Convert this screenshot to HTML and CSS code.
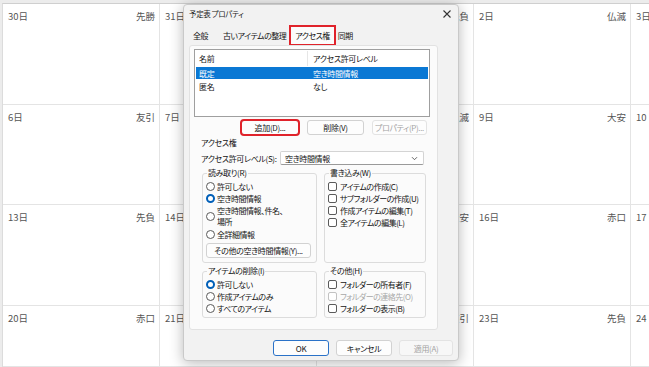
FILE: index.html
```html
<!DOCTYPE html>
<html lang="ja">
<head>
<meta charset="utf-8">
<title>予定表 プロパティ</title>
<link rel="stylesheet" href="styles.css">
</head>
<body>
<div class="cal">
  <div class="cell"><span>30日</span><span>先勝</span></div>
  <div class="cell"><span>31日</span><span>友引</span></div>
  <div class="cell"><span>1日</span><span>先負</span></div>
  <div class="cell"><span>2日</span><span>仏滅</span></div>
  <div class="cell"><span>3日</span></div>

  <div class="cell"><span>6日</span><span>友引</span></div>
  <div class="cell"><span>7日</span><span>先負</span></div>
  <div class="cell"><span>8日</span><span>仏滅</span></div>
  <div class="cell"><span>9日</span><span>大安</span></div>
  <div class="cell"><span>10</span></div>

  <div class="cell"><span>13日</span><span>先負</span></div>
  <div class="cell"><span>14日</span><span>仏滅</span></div>
  <div class="cell"><span>15日</span><span>大安</span></div>
  <div class="cell"><span>16日</span><span>赤口</span></div>
  <div class="cell"><span>17</span></div>

  <div class="cell"><span>20日</span><span>赤口</span></div>
  <div class="cell"><span>21日</span><span>先勝</span></div>
  <div class="cell"><span>22日</span><span>友引</span></div>
  <div class="cell"><span>23日</span><span>先負</span></div>
  <div class="cell"><span>24</span></div>
</div>

<div class="dialog">
  <div class="titlebar">
    <span class="title">予定表 プロパティ</span>
    <svg class="close" width="8" height="8" viewBox="0 0 8 8"><path d="M0.5 0.5 L7.5 7.5 M7.5 0.5 L0.5 7.5" stroke="#333" stroke-width="1.1" fill="none"/></svg>
  </div>
  <div class="tabs">
    <span class="tab t1">全般</span>
    <span class="tab t2">古いアイテムの整理</span>
    <span class="tab active">アクセス権</span>
    <span class="tab t4">同期</span>
  </div>
  <div class="panel">
    <div class="list">
      <div class="lrow head"><span class="c1">名前</span><span class="c2">アクセス許可レベル</span></div>
      <div class="lrow sel"><span class="c1">既定</span><span class="c2">空き時間情報</span></div>
      <div class="lrow"><span class="c1">匿名</span><span class="c2">なし</span></div>
    </div>
    <div class="btnrow">
      <span class="btn b-add">追加(D)...</span>
      <span class="btn b-del">削除(V)</span>
      <span class="btn b-prop disabled">プロパティ(P)...</span>
    </div>
    <div class="sect">アクセス権</div>
    <div class="level">
      <span class="lvl-label">アクセス許可レベル(S):</span>
      <span class="select"><span>空き時間情報</span>
        <svg width="7" height="5" viewBox="0 0 7 5"><path d="M1 1.2 L3.5 3.7 L6 1.2" stroke="#555" stroke-width="0.9" fill="none"/></svg>
      </span>
    </div>
    <div class="groups">
      <fieldset class="grp left up">
        <legend>読み取り(R)</legend>
        <div class="opt"><span class="radio"></span><span>許可しない</span></div>
        <div class="opt"><span class="radio on"></span><span>空き時間情報</span></div>
        <div class="opt two"><span class="radio"></span><span>空き時間情報、件名、<br>場所</span></div>
        <div class="opt"><span class="radio"></span><span>全詳細情報</span></div>
        <span class="btn b-more">その他の空き時間情報(Y)...</span>
      </fieldset>
      <fieldset class="grp right up">
        <legend>書き込み(W)</legend>
        <div class="opt"><span class="check"></span><span>アイテムの作成(C)</span></div>
        <div class="opt"><span class="check"></span><span>サブフォルダーの作成(U)</span></div>
        <div class="opt"><span class="check"></span><span>作成アイテムの編集(T)</span></div>
        <div class="opt"><span class="check"></span><span>全アイテムの編集(L)</span></div>
      </fieldset>
      <fieldset class="grp left low">
        <legend>アイテムの削除(I)</legend>
        <div class="opt"><span class="radio on"></span><span>許可しない</span></div>
        <div class="opt"><span class="radio"></span><span>作成アイテムのみ</span></div>
        <div class="opt"><span class="radio"></span><span>すべてのアイテム</span></div>
      </fieldset>
      <fieldset class="grp right low">
        <legend>その他(H)</legend>
        <div class="opt"><span class="check"></span><span>フォルダーの所有者(F)</span></div>
        <div class="opt dis"><span class="check"></span><span>フォルダーの連絡先(O)</span></div>
        <div class="opt"><span class="check"></span><span>フォルダーの表示(B)</span></div>
      </fieldset>
    </div>
  </div>
  <div class="footer">
    <span class="btn fbtn ok">OK</span>
    <span class="btn fbtn">キャンセル</span>
    <span class="btn fbtn disabled">適用(A)</span>
  </div>
</div>
</body>
</html>
```
FILE: styles.css
```css
* { box-sizing: border-box; margin: 0; padding: 0; }

html, body { width: 649px; height: 367px; overflow: hidden; }

body {
  position: relative;
  background: #ececec;
  font-family: "Noto Sans CJK JP", "Noto Sans", sans-serif;
  font-feature-settings: "palt";
  padding-top: 3px;
}

/* calendar */
.cal {
  margin-left: 2px;
  height: 364px;
  background: #fff;
  border-top: 1px solid #cfcfcf;
  border-left: 1px solid #dcdcdc;
  display: grid;
  grid-template-columns: repeat(5, 157px);
  grid-template-rows: 101px 100px 101px 1fr;
  overflow: hidden;
}

.cell {
  border-right: 1px solid #e4e4e4;
  border-bottom: 1px solid #e4e4e4;
  display: flex;
  justify-content: space-between;
  align-items: flex-start;
  padding: 6px 4px 0 5px;
  font-size: 9.5px;
  line-height: 12px;
  color: #555;
}

/* dialog */
.dialog {
  position: absolute;
  left: 183px;
  top: 4px;
  width: 276px;
  height: 357px;
  background: #f2f2f2;
  border: 1px solid #c9c9c9;
  border-radius: 4px;
  box-shadow: 0 2px 14px rgba(0, 0, 0, 0.28);
  font-size: 8px;
  letter-spacing: -0.35px;
  color: #141414;
  display: flex;
  flex-direction: column;
}

.titlebar {
  height: 17px;
  display: flex;
  align-items: center;
  justify-content: space-between;
  padding: 0 7px 0 5px;
}
.title { font-size: 7.5px; color: #222; }

.tabs {
  height: 19px;
  margin-top: 4px;
  display: flex;
  align-items: stretch;
  letter-spacing: -0.5px;
}
.tab {
  display: flex;
  align-items: center;
  padding: 0 4px;
}
.t1 { margin-left: 5px; }
.t2 { margin-left: 7px; }
.active {
  background: #fbfbfb;
  outline: 2px solid #e0232b;
  outline-offset: -1px;
  padding: 0 5px;
}
.t4 { padding-left: 3px; }

.panel {
  margin-left: 5px;
  width: 249px;
  height: 285px;
  background: #fbfbfb;
  border: 1px solid #e2e2e2;
  border-radius: 3px;
  padding: 3px 0 0 4px;
}

.list {
  width: 236px;
  height: 68px;
  background: #fff;
  border: 1px solid #9f9f9f;
  padding: 1px;
}
.lrow {
  display: flex;
  height: 12px;
  align-items: center;
}
.lrow.head { height: 15px; margin-bottom: 1px; }
.c1 { width: 112px; padding-left: 3px; }
.head .c1 { border-right: 1px solid #e6e6e6; height: 100%; display: flex; align-items: center; }
.c2 { padding-left: 5px; }
.lrow.sel { background: #0a78d4; color: #fff; }
.lrow:last-child { height: 14px; }

.btn {
  display: flex;
  align-items: center;
  justify-content: center;
  height: 15px;
  background: #fdfdfd;
  border: 1px solid #d2d2d2;
  border-radius: 3px;
  font-size: 8px;
  color: #141414;
  white-space: nowrap;
}
.disabled { color: #a3a3a3; border-color: #e3e3e3; }

.btnrow {
  display: flex;
  gap: 8px;
  margin: 3px 0 0 47px;
}
.b-add { width: 58px; outline: 2px solid #e0232b; outline-offset: -1px; }
.b-del { width: 57px; }
.b-prop { width: 55px; }

.sect {
  margin: 2px 0 0 7px;
  line-height: 12px;
}

.level {
  display: flex;
  align-items: center;
  margin: 2px 0 0 7px;
  height: 14px;
}
.lvl-label { width: 79px; flex: none; white-space: nowrap; }
.select {
  width: 144px;
  height: 14px;
  background: #fff;
  border: 1px solid #d4d4d4;
  border-bottom-color: #9a9a9a;
  border-radius: 2px;
  display: flex;
  align-items: center;
  justify-content: space-between;
  padding: 0 5px 0 4px;
}

.groups {
  margin: 3px 0 0 8px;
  display: grid;
  grid-template-columns: 115px 102px;
  column-gap: 7px;
  row-gap: 3px;
}
.grp {
  border: 1px solid #dcdcdc;
  border-radius: 3px;
  padding: 2px 3px 0 3px;
  min-width: 0;
}
.grp legend {
  font-size: 8px;
  line-height: 10px;
  padding: 0 1px;
  margin-left: 1px;
}
.grp.up { height: 95px; }
.grp.low { height: 52px; }

.opt {
  display: flex;
  align-items: center;
  height: 12px;
  gap: 2px;
  white-space: nowrap;
  letter-spacing: -0.5px;
}
.opt.two { height: 24px; align-items: center; line-height: 11.5px; }
.opt.dis { color: #a8a8a8; }

.radio {
  flex: none;
  width: 9px;
  height: 9px;
  border: 1px solid #5a5a5a;
  border-radius: 50%;
  background: #fff;
}
.radio.on { border: 2.5px solid #005fb8; }

.check {
  flex: none;
  width: 9px;
  height: 9px;
  border: 1px solid #5a5a5a;
  border-radius: 2px;
  background: #fff;
  margin-right: 1px;
}
.dis .check { border-color: #c2c2c2; }

.b-more {
  width: 105px;
  margin-top: 3px;
}

.footer {
  display: flex;
  justify-content: flex-end;
  gap: 7px;
  padding: 10px 5px 0 0;
}
.fbtn { width: 56px; height: 16px; }
.fbtn.ok { border-color: #2a72c8; }
.footer .disabled { width: 54px; background: #f7f7f7; }
```
